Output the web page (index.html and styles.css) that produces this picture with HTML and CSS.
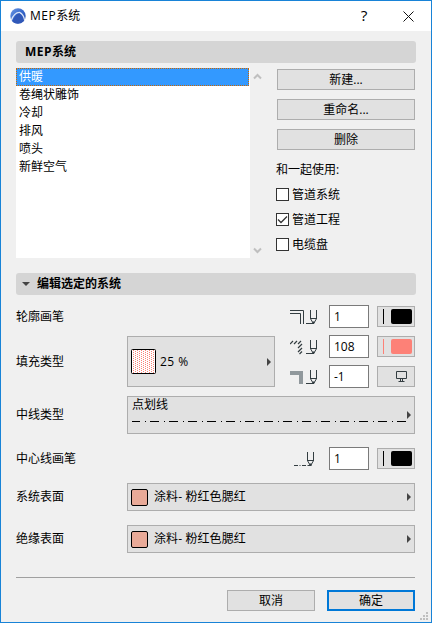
FILE: index.html
```html
<!DOCTYPE html>
<html lang="zh-CN">
<head>
<meta charset="utf-8">
<title>MEP系统</title>
<link rel="stylesheet" href="styles.css">
</head>
<body>
<svg width="0" height="0" class="defs">
  <defs>
    <linearGradient id="logoFill" x1="0" y1="0" x2="1" y2="1">
      <stop offset="0" stop-color="#6f9ae4"/><stop offset=".5" stop-color="#3567cc"/><stop offset="1" stop-color="#2448a8"/>
    </linearGradient>
    <pattern id="dots" width="4" height="2" patternUnits="userSpaceOnUse">
      <rect width="4" height="2" fill="#fff"/>
      <rect width="1" height="1" fill="#fd8177"/><rect x="2" y="1" width="1" height="1" fill="#fd8177"/>
    </pattern>
    <g id="pencil" fill="none" stroke="#333d41">
      <path d="M20.5 1v9M26.5 1v9M20.5 9.5h6"/>
      <path d="M20.7 10l2.3 4h1l2.3-4"/>
      <path d="M22.5 13.5h2" stroke-width="2"/>
    </g>
  </defs>
</svg>
<div class="window">
  <header class="titlebar">
    <svg class="logo" width="16" height="16" viewBox="0 0 16 16">
      <circle cx="8" cy="8" r="7.700" fill="url(#logoFill)"/>
      <path d="M1.200 12.500C3 7.500 6 4.300 9.500 4.300c2.500 1.200 4.500 4 5 7.700" fill="none" stroke="#dbe5f7" stroke-width="1.300"/>
      <path d="M2.500 13.500C4 9 6.500 6 9.300 5.300c2.200 1.500 3.700 4.200 4.200 7.500-3 3.200-8 3.700-11 .7z" fill="#3058b8"/>
    </svg>
    <h1><span class="latin">MEP</span>系统</h1>
    <span class="help">?</span>
    <svg class="close" width="11" height="11" viewBox="0 0 11 11"><path d="M.5.5l10 10M10.500.5l-10 10" stroke="#111" fill="none"/></svg>
  </header>
  <main>
    <h2 class="section"><span class="latin">MEP</span>系统</h2>
    <div class="systems">
      <ul class="list">
        <li class="selected">供暖</li><li>卷绳状雕饰</li><li>冷却</li><li>排风</li><li>喷头</li><li>新鲜空气</li>
      </ul>
      <div class="scroll">
        <svg width="9" height="7" viewBox="0 0 9 7"><path d="M1 5.500L4.500 2 8 5.500" fill="none" stroke="#bfbfbf" stroke-width="2"/></svg>
        <svg width="9" height="7" viewBox="0 0 9 7"><path d="M1 1.500L4.500 5 8 1.500" fill="none" stroke="#bfbfbf" stroke-width="2"/></svg>
      </div>
      <div class="actions">
        <button>新建...</button><button>重命名...</button><button>删除</button>
        <p>和一起使用:</p>
        <div class="check"><i class="box"></i>管道系统</div>
        <div class="check"><i class="box"><svg width="11" height="11" viewBox="0 0 11 11"><path d="M1 5.500L4 8.500 10 2.500" fill="none" stroke="#333" stroke-width="1.300"/></svg></i>管道工程</div>
        <div class="check"><i class="box"></i>电缆盘</div>
      </div>
    </div>
    <h2 class="section edit"><i class="triangle"></i>编辑选定的系统</h2>
    <div class="form">
      <div class="grid">
        <span class="label">轮廓画笔</span>
        <svg class="icon r1" width="28" height="16" viewBox="0 0 28 16">
          <path d="M0 1.500h13.500V15M0 4.500h10.500V15M16 14.500h8" fill="none" stroke="#333d41"/><use href="#pencil"/>
        </svg>
        <div class="field r1">1</div>
        <div class="pen r1"><i class="stroke"></i><i class="color"></i></div>

        <span class="label fill-label">填充类型</span>
        <div class="picker fill"><svg width="25" height="25" viewBox="0 0 25 25"><rect x=".5" y=".5" width="24" height="24" rx="1" fill="url(#dots)" stroke="#000"/></svg><span class="percent">25 %</span><i class="arrow"></i></div>
        <svg class="icon r2" width="28" height="16" viewBox="0 0 28 16">
          <path d="M0 5l3-3M4 5l3-3M8 5l3-3M8 9l4-4M8 13l4-4M9.500 15l2.500-2.500" fill="none" stroke="#333d41" stroke-width="1.200"/><path d="M16 14.500h8" stroke="#333d41"/><use href="#pencil"/>
        </svg>
        <div class="field r2">108</div>
        <div class="pen pink r2"><i class="stroke"></i><i class="color"></i></div>
        <svg class="icon r3" width="28" height="16" viewBox="0 0 28 16">
          <path d="M0 4h11v11" fill="none" stroke="#90989c" stroke-width="4"/><path d="M16 14.500h8" stroke="#333d41"/><use href="#pencil"/>
        </svg>
        <div class="field r3">-1</div>
        <div class="pen r3"><svg class="monitor" width="12" height="12" viewBox="0 0 12 12"><path d="M.5.5h10v7H.5zM4.500 7.500v3M6.500 7.500v3M2.500 10.500h6" fill="none" stroke="#333d41"/></svg></div>
      </div>
      <div class="row line-row">
        <span class="label">中线类型</span>
        <div class="picker line"><span>点划线</span><svg width="274" height="1" viewBox="0 0 274 1"><path d="M-1 .5h275" stroke="#000" stroke-dasharray="9 5 1 4"/></svg><i class="arrow"></i></div>
      </div>
      <div class="row center-row">
        <span class="label">中心线画笔</span>
        <svg class="icon" width="28" height="16" viewBox="0 0 28 16">
          <path d="M4 14.500h4M9.500 14.500h1M12 14.500h4M17.500 14.500h4" stroke="#333d41"/><use href="#pencil" x="-3"/>
        </svg>
        <div class="field">1</div>
        <div class="pen"><i class="stroke"></i><i class="color"></i></div>
      </div>
      <div class="row surface">
        <span class="label">系统表面</span>
        <div class="picker"><i class="swatch"></i><span class="material">涂料- 粉红色腮红</span><i class="arrow"></i></div>
      </div>
      <div class="row surface">
        <span class="label">绝缘表面</span>
        <div class="picker"><i class="swatch"></i><span class="material">涂料- 粉红色腮红</span><i class="arrow"></i></div>
      </div>
    </div>
    <footer><button>取消</button><button class="default">确定</button></footer>
  </main>
  <svg class="grip" width="8" height="8" viewBox="0 0 8 8"><path d="M6 0h2v2H6zM3 3h2v2H3zM6 3h2v2H6zM0 6h2v2H0zM3 6h2v2H3zM6 6h2v2H6z" fill="#bfbfbf"/></svg>
</div>
</body>
</html>
```
FILE: styles.css
```css
* { box-sizing: border-box; }
body {
  margin: 0;
  font: 12px/18px "Open Sans", "Noto Sans CJK SC", sans-serif;
  color: #000;
  overflow: hidden;
}
h1, h2, p, ul { margin: 0; padding: 0; font-size: 12px; }
i { display: block; flex: none; }
svg { display: block; flex: none; }
.defs { position: absolute; }
.window {
  position: relative;
  width: 432px;
  height: 623px;
  border: 1px solid #1883d7;
  background: #f0f0f0;
}
.titlebar {
  display: flex;
  align-items: center;
  height: 30px;
  padding: 0 17px 0 9px;
  background: #fff;
}
.titlebar h1 { margin-left: 4px; font-weight: 400; flex: 1; }
.latin { letter-spacing: 0.5px; }
.help { font-size: 14px; margin-right: 36px; transform: scaleX(1.1); }
main { padding: 10px 15px 0; }
.section {
  display: flex;
  align-items: center;
  width: 400px;
  height: 22px;
  padding-left: 9px;
  border-radius: 3px;
  background: #d5d5d5;
  line-height: 22px;
}
.edit { margin-top: 15px; padding-left: 6px; }
.triangle {
  margin-right: 7px;
  border: 4px solid transparent;
  border-top: 4px solid #444;
  border-bottom: 0;
}
.systems { display: flex; height: 190px; margin-top: 5px; }
.list {
  width: 234px;
  height: 190px;
  background: #fff;
  list-style: none;
}
.list li { height: 18px; padding-left: 3px; line-height: 18px; }
.list .selected {
  width: 233px;
  padding-left: 2px;
  border: 1px dotted #cc6600;
  background: #3399ff;
  color: #fff;
  line-height: 16px;
}
.scroll {
  display: flex;
  flex-direction: column;
  justify-content: space-between;
  width: 26px;
  padding: 5px 0 4px 3px;
}
.actions { padding-top: 1px; }
button {
  display: block;
  height: 21px;
  padding: 0;
  border: 1px solid #adadad;
  background: #e1e1e1;
  color: #000;
  font: inherit;
  line-height: 19px;
}
.actions button { width: 138px; margin: 0 0 9px 1px; }
.actions p { margin-top: 11px; height: 18px; line-height: 18px; }
.check { display: flex; align-items: center; height: 25px; gap: 3px; }
.actions p + .check { margin-top: 3px; }
.box { width: 13px; height: 13px; border: 1px solid #333; background: #fff; }
.form { width: 399px; }
.label { width: 111px; flex: none; }
.grid {
  display: grid;
  grid-template-columns: 111px 163px 39px 48px 38px;
  grid-template-rows: 30px 30px 30px;
  margin-top: 7px;
}
.grid > .label { grid-area: 1 / 1; padding-top: 6px; }
.grid > .fill-label { grid-area: 2 / 1 / 4 / 2; padding-top: 21px; }
.grid > .fill { grid-area: 2 / 2 / 4 / 3; width: 148px; height: 51px; margin-top: 4px; }
.r1 { grid-row: 1; }
.r2 { grid-row: 2; }
.r3 { grid-row: 3; }
.grid .icon { grid-column: 3; margin-top: 7px; }
.field {
  grid-column: 4;
  width: 40px;
  height: 23px;
  padding-left: 4px;
  border: 1px solid #7a7a7a;
  background: #fff;
  line-height: 21px;
}
.grid .field { margin-top: 3px; }
.pen {
  grid-column: 5;
  display: flex;
  width: 38px;
  height: 21px;
  padding: 2px 0 0 5px;
  border: 1px solid #adadad;
  background: #e1e1e1;
}
.grid .pen { margin-top: 4px; }
.stroke { width: 1px; height: 15px; background: #000; }
.color { width: 21px; height: 15px; margin-left: 7px; border-radius: 2px; background: #000; }
.pink .stroke, .pink .color { background: #fd8177; }
.monitor { margin: 2px 0 0 13px; }
.row { display: flex; align-items: center; }
.picker {
  position: relative;
  display: flex;
  align-items: center;
  padding-left: 3px;
  border: 1px solid #adadad;
  background: #e1e1e1;
}
.picker > svg + span { margin-left: 4px; }
.percent { letter-spacing: 0.5px; }
.material { letter-spacing: 0.1px; }
.arrow {
  margin: 0 3px 0 auto;
  border: 4px solid transparent;
  border-left: 4px solid #444;
  border-right: 0;
}
.line-row { height: 38px; margin-top: 4px; }
.line {
  width: 288px;
  height: 38px;
  display: grid;
  grid-template: 15px 1fr / 1fr auto;
  padding-left: 4px;
}
.line span { line-height: 16px; }
.line svg { grid-area: 2 / 1; align-self: start; margin-top: 9px; }
.line .arrow { grid-area: 1 / 2 / 3 / 3; margin: 0 3px 0 0; }
.center-row { height: 23px; margin-top: 13px; }
.center-row .label { width: 274px; }
.center-row .icon { margin-right: 11px; }
.center-row .pen { margin-left: 8px; }
.surface { height: 28px; margin-top: 13px; }
.surface + .surface { margin-top: 14px; }
.surface .picker { width: 288px; height: 28px; }
.swatch {
  width: 17px;
  height: 17px;
  margin-right: 6px;
  border: 1px solid #000;
  border-radius: 2px;
  background: #e9aa98;
}
footer {
  display: flex;
  justify-content: flex-end;
  gap: 12px;
  width: 399px;
  margin-top: 24px;
  padding-top: 12px;
  border-top: 1px solid #a0a0a0;
}
footer button { width: 88px; }
footer .default { border: 2px solid #0078d7; line-height: 17px; }
.grip { position: absolute; right: 3px; bottom: 2px; }
```
